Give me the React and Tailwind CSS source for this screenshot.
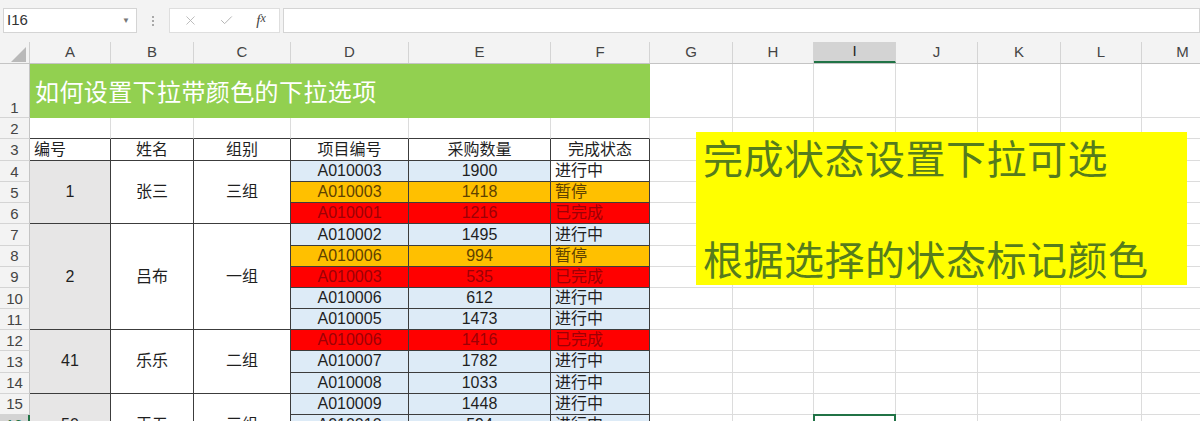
import { X, Check } from "lucide-react";

const RIGHT_COLS = [
    { key: "G", w: "w-[83px]" },
    { key: "H", w: "w-[81px]" },
    { key: "I", w: "w-[82px]" },
    { key: "J", w: "w-[82px]" },
    { key: "K", w: "w-[83px]" },
    { key: "L", w: "w-[81px]" },
    { key: "M", w: "w-[82px]" },
];

const HEADER_COLS = [
    { key: "A", w: "w-[81px]" },
    { key: "B", w: "w-[83px]" },
    { key: "C", w: "w-[97px]" },
    { key: "D", w: "w-[118px]" },
    { key: "E", w: "w-[142px]" },
    { key: "F", w: "w-[99px]" },
    ...RIGHT_COLS,
];

const ROW_H = "h-[21.17px]";

// sheet rows 1..17 and their heights
const SHEET_ROWS = [
    { n: 1, h: "h-[54px]" },
    { n: 2, h: "h-[21px]" },
    { n: 3, h: "h-[22px]" },
    ...[4, 5, 6, 7, 8, 9, 10, 11, 12, 13, 14, 15, 16, 17].map((n) => ({ n, h: ROW_H })),
];

const FILLS = {
    blue: "bg-[#ddebf7] text-[#1f1f1f]",
    pause: "bg-[#ffc000] text-[#5e4200]",
    done: "bg-[#ff0000] text-[#9c0006]",
    none: "bg-white text-[#1f1f1f]",
};

const groups = [
    {
        no: "1",
        name: "张三",
        team: "三组",
        rows: [
            { code: "A010003", qty: "1900", status: "进行中", fill: "blue", statusFill: "none" },
            { code: "A010003", qty: "1418", status: "暂停", fill: "pause" },
            { code: "A010001", qty: "1216", status: "已完成", fill: "done" },
        ],
    },
    {
        no: "2",
        name: "吕布",
        team: "一组",
        rows: [
            { code: "A010002", qty: "1495", status: "进行中", fill: "blue" },
            { code: "A010006", qty: "994", status: "暂停", fill: "pause" },
            { code: "A010003", qty: "535", status: "已完成", fill: "done" },
            { code: "A010006", qty: "612", status: "进行中", fill: "blue" },
            { code: "A010005", qty: "1473", status: "进行中", fill: "blue" },
        ],
    },
    {
        no: "41",
        name: "乐乐",
        team: "二组",
        rows: [
            { code: "A010006", qty: "1416", status: "已完成", fill: "done" },
            { code: "A010007", qty: "1782", status: "进行中", fill: "blue" },
            { code: "A010008", qty: "1033", status: "进行中", fill: "blue" },
        ],
    },
    {
        no: "50",
        name: "王五",
        team: "三组",
        rows: [
            { code: "A010009", qty: "1448", status: "进行中", fill: "blue" },
            { code: "A010010", qty: "594", status: "进行中", fill: "blue" },
            { code: "A010011", qty: "1210", status: "进行中", fill: "blue" },
        ],
    },
];

const DARK = "border-[#3c3c3c]";
const GRID = "border-[#dcdcdc]";

function FormulaBar() {
    return (
        <div className="flex h-[42px] items-start bg-[#f3f3f3] pt-[8px] pl-[3px]">
            <div className="flex h-[25px] w-[134px] shrink-0 items-center justify-between border border-[#d4d4d4] bg-white pl-[3px] pr-[6px]">
                <span className="text-[15px] text-[#333]">I16</span>
                <span className="text-[8px] text-[#777]">▼</span>
            </div>
            <div className="flex h-[25px] w-[32px] shrink-0 flex-col items-center justify-center gap-[2px]">
                <span className="h-[2px] w-[2px] bg-[#a8a8a8]" />
                <span className="h-[2px] w-[2px] bg-[#a8a8a8]" />
                <span className="h-[2px] w-[2px] bg-[#a8a8a8]" />
            </div>
            <div className="flex h-[25px] w-[111px] shrink-0 items-center border border-[#dedede] bg-white">
                <span className="flex w-[38px] justify-center pl-[2px]">
                    <X size={15} strokeWidth={1.4} color="#b4b4b4" />
                </span>
                <span className="flex w-[36px] justify-center">
                    <Check size={15} strokeWidth={1.6} color="#b4b4b4" />
                </span>
                <span className="flex w-[34px] justify-center font-['Liberation_Serif',serif] text-[15px] italic text-[#444]">
                    f<span className="text-[12px]">x</span>
                </span>
            </div>
            <div className="ml-[3px] h-[25px] flex-1 border border-[#d4d4d4] bg-white" />
        </div>
    );
}

function ColumnHeaders() {
    return (
        <div className="flex h-[22px] border-b border-[#c4c4c4] bg-[#f3f3f3]">
            <div className="flex w-[30px] shrink-0 items-end justify-end border-r border-[#cfcfcf] pb-[1px] pr-[3px]">
                <svg width="15" height="15" viewBox="0 0 15 15">
                    <polygon points="15,0 15,15 0,15" fill="#b9b9b9" />
                </svg>
            </div>
            {HEADER_COLS.map((c) => (
                <div
                    key={c.key}
                    className={`${c.w} flex shrink-0 items-center justify-center border-r border-[#d4d4d4] text-[15px] ${
                        c.key === "I"
                            ? "border-b-2 border-b-[#217346] bg-[#d3d3d3] text-[#222]"
                            : "text-[#444]"
                    }`}
                >
                    {c.key}
                </div>
            ))}
        </div>
    );
}

function RowHeaders() {
    return (
        <div className="flex w-[30px] shrink-0 flex-col bg-[#f3f3f3]">
            {SHEET_ROWS.map((r) => (
                <div
                    key={r.n}
                    className={`${r.h} flex shrink-0 justify-center border-b border-[#d4d4d4] text-[15px] leading-none ${
                        r.n === 1 ? "items-end pb-[2px]" : "items-center"
                    } ${
                        r.n === 16
                            ? "border-r-2 border-r-[#217346] bg-[#d3d3d3] text-[#217346]"
                            : "border-r border-r-[#c4c4c4] text-[#444]"
                    }`}
                >
                    {r.n}
                </div>
            ))}
        </div>
    );
}

function DataRow({ row }) {
    const fill = FILLS[row.fill];
    const statusFill = FILLS[row.statusFill || row.fill];
    return (
        <div className={`flex ${ROW_H}`}>
            <div className={`flex w-[118px] items-center justify-center border-r border-b ${DARK} ${fill}`}>
                {row.code}
            </div>
            <div className={`flex w-[142px] items-center justify-center border-r border-b ${DARK} ${fill}`}>
                {row.qty}
            </div>
            <div className={`flex w-[99px] items-center border-r border-b pl-[4px] ${DARK} ${statusFill}`}>
                {row.status}
            </div>
        </div>
    );
}

function Table() {
    return (
        <div className="flex w-[620px] shrink-0 flex-col text-[16px] leading-none">
            <div className="flex h-[54px] items-center bg-[#92d050] pl-[5px] pt-[4px] text-[24px] tracking-[0.4px] text-white">
                如何设置下拉带颜色的下拉选项
            </div>
            <div className="flex h-[21px]">
                {["w-[81px]", "w-[83px]", "w-[97px]", "w-[118px]", "w-[142px]", "w-[99px]"].map((w) => (
                    <div key={w} className={`${w} border-r ${GRID} border-b border-b-[#3c3c3c]`} />
                ))}
            </div>
            <div className="flex h-[22px] text-[#1f1f1f]">
                <div className={`flex w-[81px] items-center border-r border-b pl-[4px] ${DARK}`}>编号</div>
                <div className={`flex w-[83px] items-center justify-center border-r border-b ${DARK}`}>姓名</div>
                <div className={`flex w-[97px] items-center justify-center border-r border-b ${DARK}`}>组别</div>
                <div className={`flex w-[118px] items-center justify-center border-r border-b ${DARK}`}>项目编号</div>
                <div className={`flex w-[142px] items-center justify-center border-r border-b ${DARK}`}>采购数量</div>
                <div className={`flex w-[99px] items-center justify-center border-r border-b ${DARK}`}>完成状态</div>
            </div>
            {groups.map((g) => (
                <div key={g.no} className="flex text-[#1f1f1f]">
                    <div className={`flex w-[81px] items-center justify-center border-r border-b bg-[#e7e6e6] ${DARK}`}>
                        {g.no}
                    </div>
                    <div className={`flex w-[83px] items-center justify-center border-r border-b bg-white ${DARK}`}>
                        {g.name}
                    </div>
                    <div className={`flex w-[97px] items-center justify-center border-r border-b bg-white ${DARK}`}>
                        {g.team}
                    </div>
                    <div className="flex flex-col">
                        {g.rows.map((r, i) => (
                            <DataRow key={i} row={r} />
                        ))}
                    </div>
                </div>
            ))}
        </div>
    );
}

function RightGrid() {
    return (
        <div className="flex flex-col">
            {SHEET_ROWS.map((r) => (
                <div key={r.n} className={`flex ${r.h}`}>
                    {RIGHT_COLS.map((c) => (
                        <div key={c.key} className={`${c.w} relative shrink-0 border-r border-b ${GRID}`}>
                            {r.n === 16 && c.key === "I" && (
                                <div className="absolute -top-px -left-px -right-px -bottom-px border-2 border-[#217346]" />
                            )}
                        </div>
                    ))}
                </div>
            ))}
        </div>
    );
}

export default function App() {
    return (
        <div className="h-[421px] w-[1200px] overflow-hidden bg-white font-['Liberation_Sans','Noto_Sans_CJK_SC',sans-serif]">
            <FormulaBar />
            <ColumnHeaders />
            <div className="flex">
                <RowHeaders />
                <div className="relative flex">
                    <Table />
                    <RightGrid />
                    <div className="absolute left-[666px] top-[68px] h-[153px] w-[491px] bg-[#ffff00] pl-[7px] pt-[3px] text-[40px] leading-[50.5px] tracking-[0.5px] text-[#557c1d]">
                        <div>完成状态设置下拉可选</div>
                        <div>&nbsp;</div>
                        <div>根据选择的状态标记颜色</div>
                    </div>
                </div>
            </div>
        </div>
    );
}
